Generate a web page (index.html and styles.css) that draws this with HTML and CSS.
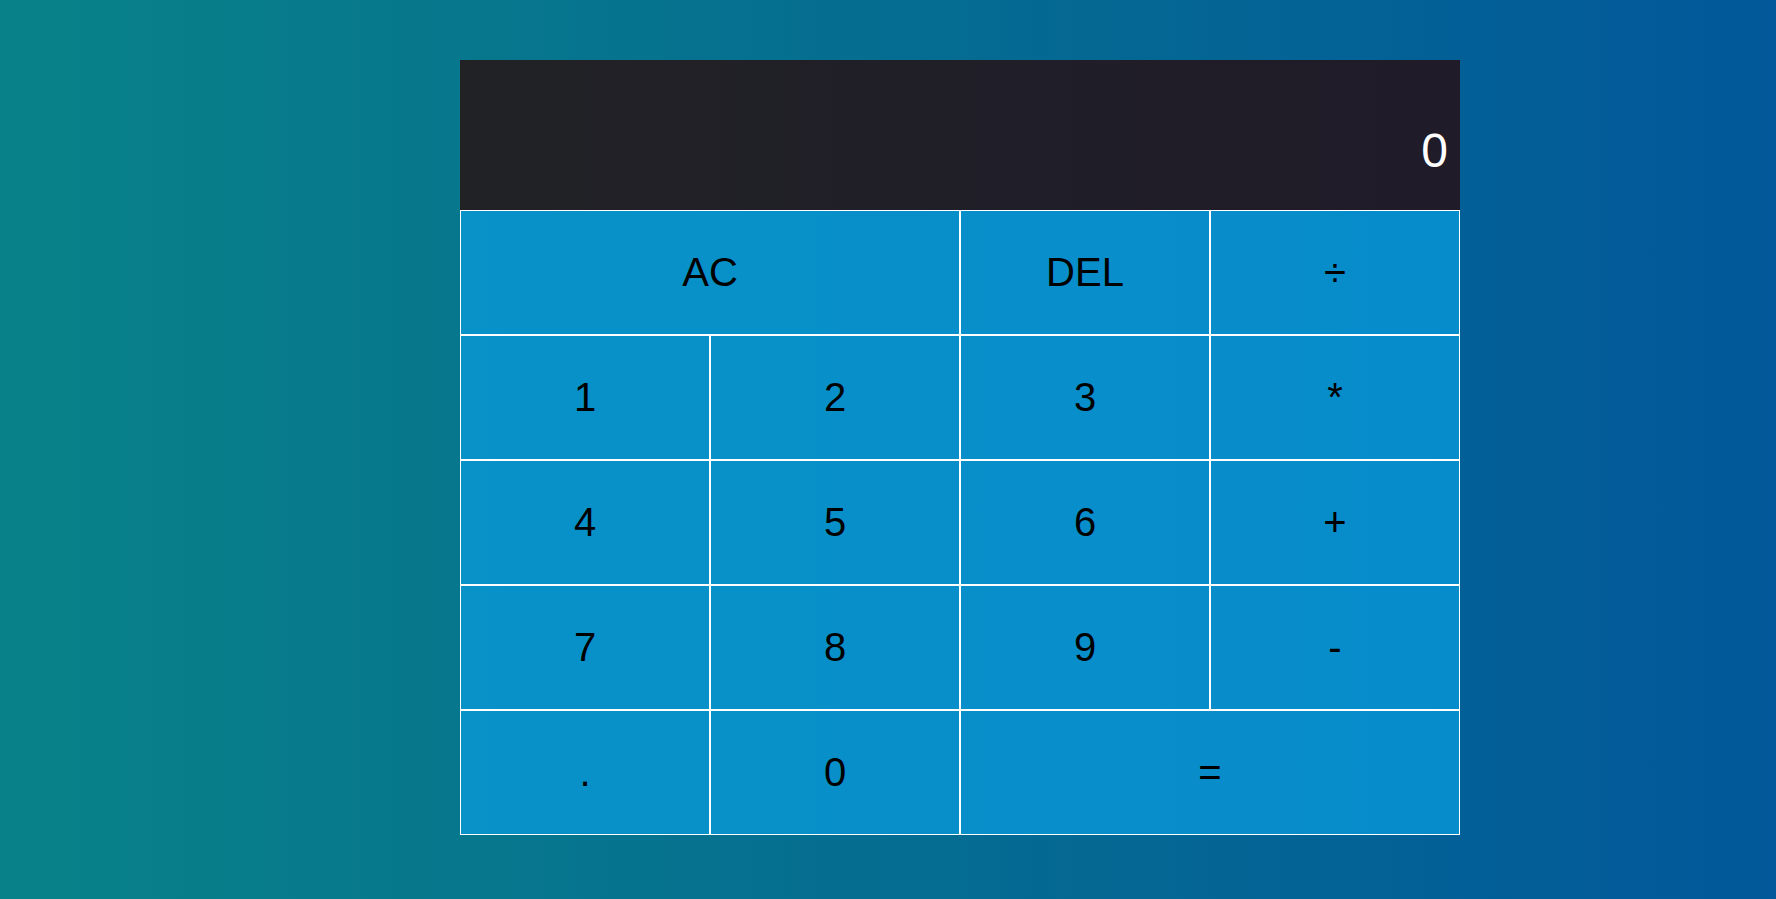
FILE: index.html
```html
<!DOCTYPE html>
<html lang="en">
<head>
<meta charset="utf-8">
<title>Calculator</title>
<link rel="stylesheet" href="styles.css">
</head>
<body>
<div class="calculator-grid">
  <div class="output">
    <div class="previous-operand"></div>
    <div class="current-operand">0</div>
  </div>
  <button class="span-two">AC</button>
  <button>DEL</button>
  <button>÷</button>
  <button>1</button>
  <button>2</button>
  <button>3</button>
  <button>*</button>
  <button>4</button>
  <button>5</button>
  <button>6</button>
  <button>+</button>
  <button>7</button>
  <button>8</button>
  <button>9</button>
  <button>-</button>
  <button>.</button>
  <button>0</button>
  <button class="span-two">=</button>
</div>
</body>
</html>
```
FILE: styles.css
```css
*, *::before, *::after {
  box-sizing: border-box;
  font-family: "Liberation Sans", Arial, sans-serif;
  font-weight: normal;
}

html, body {
  margin: 0;
  padding: 0;
}

body {
  min-height: 100vh;
  background: linear-gradient(to right, #088288, #02589a);
  overflow: hidden;
}

.calculator-grid {
  display: grid;
  grid-template-columns: repeat(4, 250px);
  grid-template-rows: 150px repeat(5, 125px);
  padding-top: 60px;
  padding-left: 460px;
}

.calculator-grid > button {
  font-size: 40px;
  color: #000;
  border: 1px solid #fff;
  outline: none;
  background-color: rgba(9, 155, 220, 0.75);
  padding: 0;
  margin: 0;
  cursor: pointer;
}

.span-two {
  grid-column: span 2;
}

.output {
  grid-column: 1 / -1;
  background: linear-gradient(to right, #212226, #1f1b29);
  display: flex;
  flex-direction: column;
  align-items: flex-end;
  justify-content: flex-end;
  padding: 10px 12px 32px 10px;
}

.previous-operand {
  color: rgba(255, 255, 255, 0.75);
  font-size: 24px;
}

.current-operand {
  color: #fff;
  font-size: 48px;
}
```
